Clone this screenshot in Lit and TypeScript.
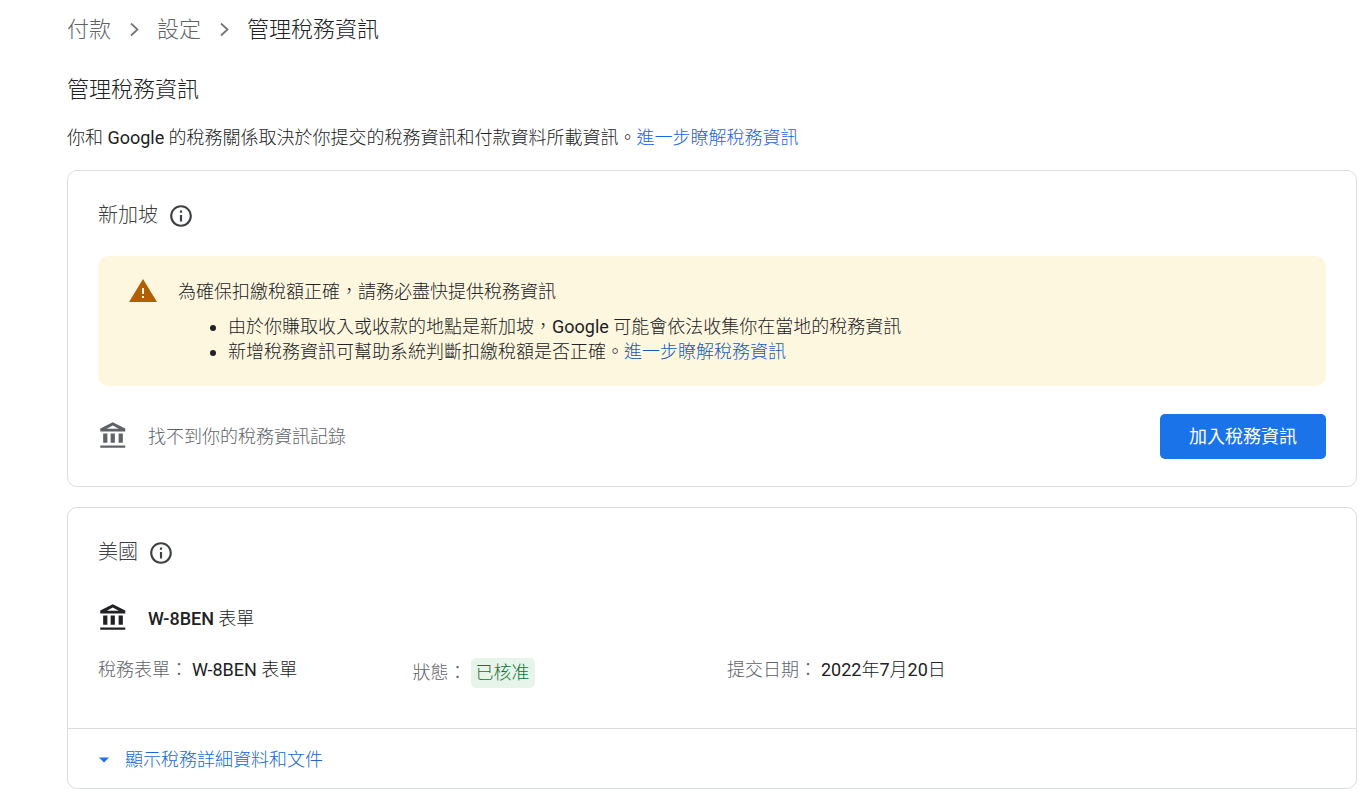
import { LitElement, html, css, svg } from "lit";
import { customElement } from "lit/decorators.js";

const infoIcon = svg`<svg class="icon-info" viewBox="0 0 24 24" aria-hidden="true"><path d="M11 7h2v2h-2zm0 4h2v6h-2zm1-9C6.48 2 2 6.48 2 12s4.48 10 10 10 10-4.480 10-10S17.520 2 12 2zm0 18c-4.410 0-8-3.590-8-8s3.590-8 8-8 8 3.590 8 8-3.590 8-8 8z"/></svg>`;
const bankIcon = svg`<svg class="icon-bank" viewBox="0 -940 960 960" aria-hidden="true"><path d="M165-280v-290h135v290H165Zm240 0v-290h135v290H405ZM72-120v-72h800v72H72Zm588-160v-290h135v290H660ZM72-640v-90l400-200 400 200v90H72Zm208-85h384L472-825 280-725Z"/></svg>`;
const warningIcon = svg`<svg class="icon-warning" viewBox="0 0 30 30" aria-hidden="true"><path fill-rule="evenodd" d="M15 3 29 26H1ZM14 12v6h2v-6ZM14 20v2h2v-2Z"/></svg>`;
const chevron = svg`<svg class="icon-chevron" viewBox="0 0 10 14" aria-hidden="true"><path d="M2 0.500 8.500 6.500l-6.500 6"/></svg>`;

@customElement("app-root")
export class AppRoot extends LitElement {
  static styles = css`
    :host {
      display: block;
      background: #fff;
      color: #202124;
      font: 400 18px/24px Roboto, "Noto Sans CJK TC", sans-serif;
    }
    * { box-sizing: border-box; }
    h1, h2, h3, p, ul, ol, dl, dd { margin: 0; padding: 0; font-weight: 300; }
    .page { padding: 14px 2px 0 67px; font-weight: 300; }
    .latin { font-weight: 400; }
    .latin-strong { font-weight: 500; }
    svg { flex: none; display: block; fill: currentColor; }
    .crumbs { display: flex; align-items: center; list-style: none; font-size: 22px; line-height: 32px; }
    .crumbs li { display: flex; align-items: center; }
    .crumbs a { color: #5f6368; text-decoration: none; }
    .icon-chevron { width: 10px; height: 14px; margin: 0 18px; fill: none; stroke: #757575; stroke-width: 1.800; }
    h1 { font-size: 22px; line-height: 32px; margin-top: 28px; }
    .intro { margin-top: 20px; }
    .link { color: #1a62e8; text-decoration: none; }
    .card { margin-top: 20px; border: 1px solid #dadce0; border-radius: 10px; }
    .body { padding: 30px 30px 27px; }
    h2 { display: flex; align-items: center; gap: 10px; font-size: 20px; line-height: 28px; color: #3c4043; }
    .info { margin-top: 2px; border: 0; padding: 0; background: none; color: #3c4043; cursor: pointer; }
    .icon-info { width: 26px; height: 26px; }
    .icon-bank { width: 30px; height: 30px; }
    .icon-warning { width: 30px; height: 30px; color: #b06000; }
    .notice { display: flex; gap: 20px; margin-top: 27px; padding: 20px 30px 22px; border-radius: 10px; background: #fef7e0; }
    .notice p { line-height: 32px; }
    .notice ul { margin: 6px 0 0; padding-left: 50px; line-height: 25px; }
    .notice .link { color: #185abc; }
    .record { display: flex; align-items: center; gap: 20px; font-size: 18px; }
    .empty { margin-top: 28px; color: #5f6368; }
    .primary { margin-left: auto; padding: 0 29px; height: 45px; border: 0; border-radius: 5px; background: #1a73e8; color: #fff; font: inherit; font-weight: 400; cursor: pointer; }
    .form { margin-top: 38px; }
    .facts { display: grid; grid-template-columns: repeat(4, 1fr); column-gap: 30px; align-items: start; margin: 24px 0 13px; }
    .facts div { display: flex; align-items: center; gap: 4px; white-space: nowrap; }
    dt { color: #5f6368; }
    .chip { padding: 0 5px; line-height: 30px; border-radius: 5px; background: #e6f4ea; color: #137333; }
    .expand { display: flex; align-items: center; gap: 15px; width: 100%; padding: 18px 30px 15px; border: 0; border-top: 1px solid #dadce0; background: none; color: #1967d2; font: inherit; line-height: 26px; cursor: pointer; }
    .icon-caret { width: 12px; height: 6px; color: #1a73e8; }
  `;

  render() {
    return html`
      <main class="page" lang="zh-Hant">
        <nav aria-label="導覽路徑">
          <ol class="crumbs">
            <li><a href="#payments">付款</a>${chevron}</li>
            <li><a href="#settings">設定</a>${chevron}</li>
            <li aria-current="page">管理稅務資訊</li>
          </ol>
        </nav>
        <h1>管理稅務資訊</h1>
        <p class="intro">你和 <span class="latin">Google</span> 的稅務關係取決於你提交的稅務資訊和付款資料所載資訊。<a class="link" href="#learn">進一步瞭解稅務資訊</a></p>

        <section class="card">
          <div class="body">
            <h2>新加坡<button class="info" aria-label="說明">${infoIcon}</button></h2>
            <div class="notice">
              ${warningIcon}
              <div>
                <p>為確保扣繳稅額正確，請務必盡快提供稅務資訊</p>
                <ul>
                  <li>由於你賺取收入或收款的地點是新加坡，<span class="latin">Google</span> 可能會依法收集你在當地的稅務資訊</li>
                  <li>新增稅務資訊可幫助系統判斷扣繳稅額是否正確。<a class="link" href="#learn">進一步瞭解稅務資訊</a></li>
                </ul>
              </div>
            </div>
            <div class="record empty">
              ${bankIcon}
              <span>找不到你的稅務資訊記錄</span>
              <button class="primary">加入稅務資訊</button>
            </div>
          </div>
        </section>

        <section class="card">
          <div class="body">
            <h2>美國<button class="info" aria-label="說明">${infoIcon}</button></h2>
            <h3 class="record form">${bankIcon}<span><span class="latin-strong">W-8BEN</span> 表單</span></h3>
            <dl class="facts">
              <div><dt>稅務表單：</dt><dd><span class="latin">W-8BEN</span> 表單</dd></div>
              <div><dt>狀態：</dt><dd class="chip">已核准</dd></div>
              <div><dt>提交日期：</dt><dd><span class="latin">2022</span>年<span class="latin">7</span>月<span class="latin">20</span>日</dd></div>
            </dl>
          </div>
          <button class="expand" aria-expanded="false">
            <svg class="icon-caret" viewBox="0 0 12 6" aria-hidden="true"><path d="M1 0.500h10l-5 5z"/></svg>
            <span>顯示稅務詳細資料和文件</span>
          </button>
        </section>
      </main>
    `;
  }
}
